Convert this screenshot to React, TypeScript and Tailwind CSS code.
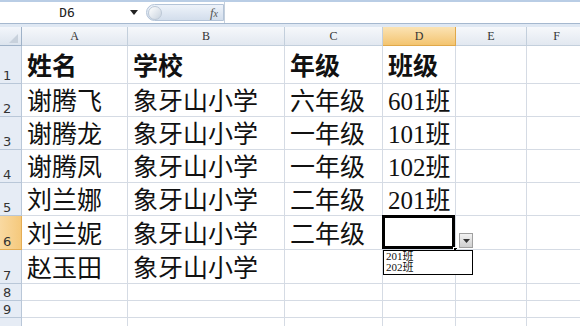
import React from 'react';

// 列宽 / 行高 (px)
const cols = [
    { key: 'A', w: 106 },
    { key: 'B', w: 157 },
    { key: 'C', w: 98 },
    { key: 'D', w: 73 },
    { key: 'E', w: 71 },
    { key: 'F', w: 60 },
];

const rowHeights = [38, 33, 33, 33, 33, 34, 34, 17, 17, 20];

const data: string[][] = [
    ['姓名', '学校', '年级', '班级'],
    ['谢腾飞', '象牙山小学', '六年级', '601班'],
    ['谢腾龙', '象牙山小学', '一年级', '101班'],
    ['谢腾凤', '象牙山小学', '一年级', '102班'],
    ['刘兰娜', '象牙山小学', '二年级', '201班'],
    ['刘兰妮', '象牙山小学', '二年级', ''],
    ['赵玉田', '象牙山小学', '', ''],
];

const serif = { fontFamily: '"Liberation Serif", "Noto Sans CJK SC", serif' };

const FormulaBar = () => (
    <div className="flex flex-col">
        <div className="h-[2px] bg-[#b9cde5]" />
        <div className="flex h-[22px] bg-white border-b border-[#a5b8cf]">
            <div className="w-[146px] flex items-center relative">
                <span className="flex-1 text-center text-[13px] text-[#222] pl-[4px]" style={{ fontFamily: '"DejaVu Sans Mono", monospace' }}>
                    D6
                </span>
                <svg width="8" height="5" viewBox="0 0 8 5" className="mr-[8px]">
                    <path d="M0 0 L8 0 L4 5 Z" fill="#222" />
                </svg>
            </div>
            <div className="w-[78px] my-[2px] rounded-l-full bg-gradient-to-b from-[#eef3fa] to-[#d3deec] border border-[#b4c4d8] flex items-center">
                <div className="w-[14px] h-[14px] ml-[1px] rounded-full bg-gradient-to-br from-white to-[#c9d3df] border border-[#bcc8d6]" />
                <span className="ml-auto mr-[5px] italic text-[13px] text-[#555]" style={serif}>
                    f<span className="text-[10px]">x</span>
                </span>
            </div>
            <div className="flex-1 border-l border-[#c4cfdc]" />
        </div>
        <div className="h-[3px] bg-[#dfe8f3]" />
    </div>
);

const Sheet = () => {
    const gridCols = 'grid grid-cols-[22px_106px_157px_98px_73px_71px_60px]';
    return (
        <div className="flex flex-col">
            {/* 列标题 */}
            <div className={`${gridCols} h-[19px]`}>
                <div className="relative bg-gradient-to-b from-[#f3f6fb] to-[#dce4ee] border-r border-b border-[#9fb2c8]">
                    <svg width="9" height="9" viewBox="0 0 9 9" className="absolute right-[3px] bottom-[2px]">
                        <path d="M9 0 L9 9 L0 9 Z" fill="#c8d1dc" />
                    </svg>
                </div>
                {cols.map((c) => (
                    <div
                        key={c.key}
                        className={
                            c.key === 'D'
                                ? 'flex items-center justify-center text-[12px] text-[#333] bg-gradient-to-b from-[#fbe3b3] to-[#f3c46f] border-r border-b border-[#e0a84a]'
                                : 'flex items-center justify-center text-[12px] text-[#333] bg-gradient-to-b from-[#f6f8fb] to-[#e2e8f0] border-r border-b border-[#c3cfdc]'
                        }
                        style={serif}
                    >
                        {c.key}
                    </div>
                ))}
            </div>

            {/* 数据行 */}
            {rowHeights.map((h, r) => {
                const row = data[r] ?? [];
                const isActiveRow = r === 5;
                return (
                    <div key={r} className={gridCols} style={{ height: h }}>
                        <div
                            className={
                                isActiveRow
                                    ? 'flex items-end pl-[3px] pb-[1px] text-[13px] leading-none text-[#333] bg-gradient-to-r from-[#f9d9a1] to-[#f5c97c] border-r border-b border-[#e4ad55]'
                                    : 'flex items-end pl-[3px] pb-[1px] text-[13px] leading-none text-[#333] bg-[#e6ecf5] border-r border-b border-[#b9c7d8]'
                            }
                            style={{ fontFamily: '"DejaVu Sans", sans-serif' }}
                        >
                            {/* 第10行只露出一截，不显示行号 */}
                            {r < 9 ? r + 1 : ''}
                        </div>
                        {cols.map((c, ci) => {
                            const text = row[ci] ?? '';
                            const active = isActiveRow && c.key === 'D';
                            return (
                                <div
                                    key={c.key}
                                    className={
                                        r === 0
                                            ? 'relative flex items-end pl-[5px] pb-[4px] text-[25px] leading-none font-semibold text-[#111] border-r border-b border-[#d5dbe4] whitespace-nowrap'
                                            : 'relative flex items-end pl-[5px] pb-[2px] text-[25px] leading-none text-[#111] border-r border-b border-[#d5dbe4] whitespace-nowrap'
                                    }
                                    style={serif}
                                >
                                    {text}
                                    {active && (
                                        <>
                                            <div className="absolute -left-[1px] -top-[1px] right-0 bottom-0 border-[3px] border-black" />
                                            <div className="absolute -right-[3px] -bottom-[3px] w-[5px] h-[5px] bg-black border border-white" />
                                        </>
                                    )}
                                </div>
                            );
                        })}
                    </div>
                );
            })}
        </div>
    );
};

export default function App() {
    return (
        <div className="relative w-[580px] h-[326px] overflow-hidden bg-white">
            <FormulaBar />
            <Sheet />

            {/* 数据有效性下拉按钮 */}
            <div className="absolute left-[459px] top-[233px] w-[14px] h-[15px] bg-gradient-to-b from-[#f2f2f2] to-[#cfcfcf] border border-[#a0a0a0] flex items-center justify-center">
                <svg width="7" height="4" viewBox="0 0 7 4">
                    <path d="M0 0 L7 0 L3.5 4 Z" fill="#333" />
                </svg>
            </div>

            {/* 下拉列表 */}
            <div
                className="absolute left-[383px] top-[250px] w-[90px] h-[25px] bg-white border border-black flex flex-col pl-[2px] text-[11px] leading-[11px] text-[#111]"
                style={serif}
            >
                <span>201班</span>
                <span>202班</span>
            </div>
        </div>
    );
}
